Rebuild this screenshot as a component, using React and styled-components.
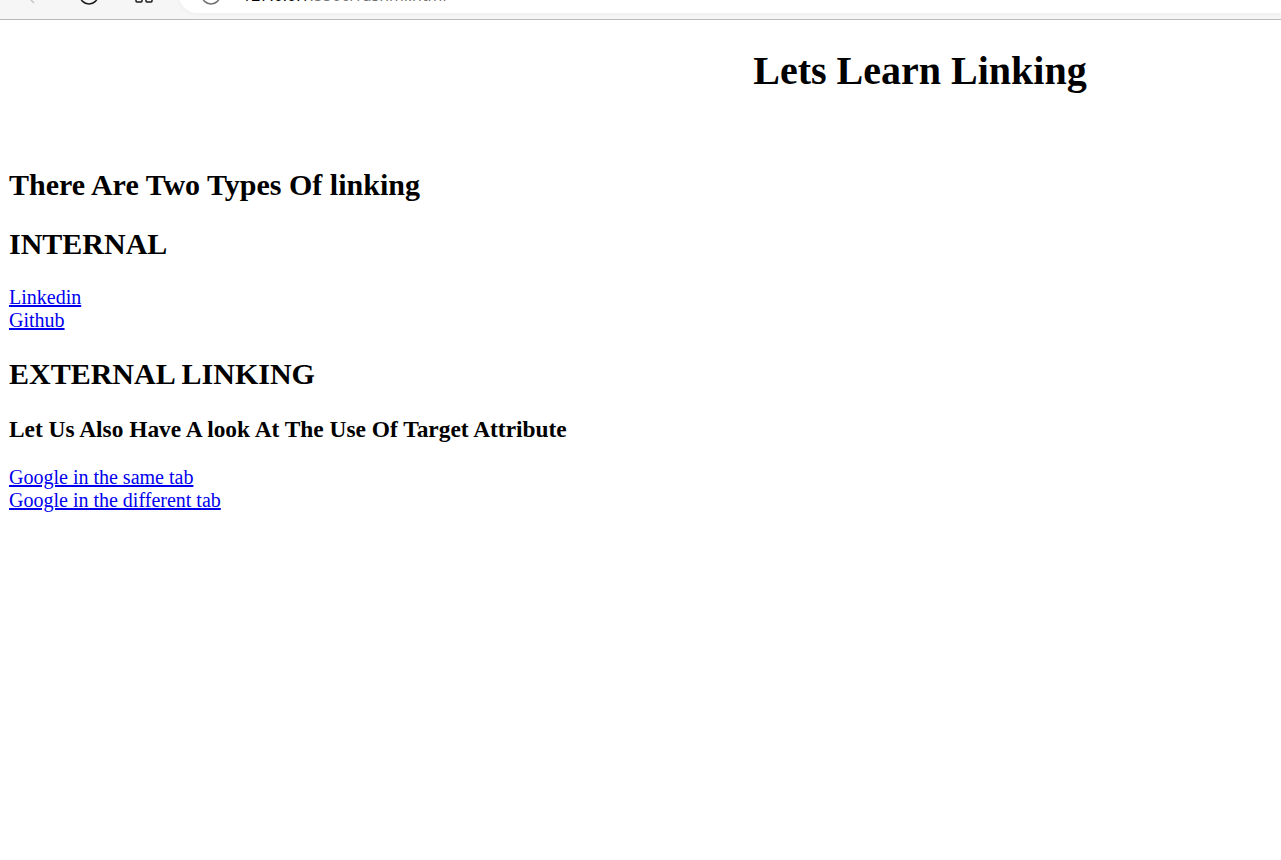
import React from 'react';
import styled, { createGlobalStyle } from 'styled-components';

const GlobalStyle = createGlobalStyle`
  body {
    margin: 0;
    background: #fff;
    color: #000;
    font-family: "Liberation Serif", "Times New Roman", serif;
    font-size: 20px;
    line-height: 23px;
    overflow-x: hidden;
  }
`;

const BrowserBar = styled.header`
  display: flex;
  flex-direction: column;
  justify-content: flex-end;
  height: 19px;
  overflow: hidden;
  background: #f6f6f6;
  border-bottom: 1px solid #bababa;
`;

const Toolbar = styled.div`
  display: flex;
  flex: none;
  align-items: center;
  height: 36px;
  padding: 0 0 6px 20px;
`;

const ToolButton = styled.button`
  display: flex;
  flex: none;
  width: 24px;
  height: 24px;
  margin-right: 31px;
  padding: 0;
  border: 0;
  background: none;
  color: ${(p) => (p.$muted ? '#c8c8c8' : '#1b1b1b')};
`;

const AddressBar = styled.div`
  display: flex;
  flex: 1;
  align-items: center;
  gap: 19px;
  height: 36px;
  margin-left: -6px;
  padding-left: 20px;
  border-radius: 18px 0 0 18px;
  background: #fff;
  box-shadow: 0 1px 4px #ececec;
  color: #707070;
`;

const Address = styled.span`
  font: 16px/20px "Open Sans", sans-serif;
`;

const Host = styled.span`
  color: #000;
`;

const Page = styled.main`
  padding: 0 9px;
`;

const Title = styled.h1`
  margin: 28px 0 74px;
  padding-left: 559px;
  text-align: center;
  font-size: 40px;
  line-height: 46px;
`;

const Heading = styled.h2`
  margin: 25px 0;
  font-size: 30px;
  line-height: 34px;
`;

const SubHeading = styled.h3`
  margin: 25px 0 23px;
  line-height: 27px;
`;

const Links = styled.nav`
  display: flex;
  flex-direction: column;
  align-items: flex-start;
`;

const Link = styled.a`
  color: #0000ee;
  text-decoration: underline;
`;

export default function App() {
  return (
    <>
      <GlobalStyle />
      <BrowserBar>
        <Toolbar>
          <ToolButton $muted aria-label="Back">
            <svg width="24" height="24" fill="none" stroke="currentColor" strokeWidth="1.5">
              <path d="M14 3L5 11L14 20" />
            </svg>
          </ToolButton>
          <ToolButton aria-label="Refresh">
            <svg width="24" height="24" fill="none" stroke="currentColor" strokeWidth="1.5">
              <circle cx="14" cy="12" r="9" />
            </svg>
          </ToolButton>
          <ToolButton aria-label="Apps">
            <svg width="24" height="24" fill="none" stroke="currentColor" strokeWidth="1.5">
              <rect x="6" y="2" width="6" height="6" rx="1" />
              <rect x="16" y="2" width="6" height="6" rx="1" />
              <rect x="6" y="13" width="6" height="6" rx="1" />
              <rect x="16" y="13" width="6" height="6" rx="1" />
            </svg>
          </ToolButton>
          <AddressBar>
            <svg width="24" height="24" fill="none" stroke="currentColor" strokeWidth="1.5">
              <circle cx="12" cy="12" r="9" />
            </svg>
            <Address><Host>127.0.0.1</Host>:5500/rashmi.html</Address>
          </AddressBar>
        </Toolbar>
      </BrowserBar>
      <Page>
        <Title>Lets Learn Linking</Title>
        <Heading>There Are Two Types Of linking</Heading>
        <Heading>INTERNAL</Heading>
        <Links>
          <Link href="#linkedin">Linkedin</Link>
          <Link href="#github">Github</Link>
        </Links>
        <Heading>EXTERNAL LINKING</Heading>
        <SubHeading>Let Us Also Have A look At The Use Of Target Attribute</SubHeading>
        <Links>
          <Link href="#same-tab">Google in the same tab</Link>
          <Link href="#different-tab" target="_blank">Google in the different tab</Link>
        </Links>
      </Page>
    </>
  );
}
